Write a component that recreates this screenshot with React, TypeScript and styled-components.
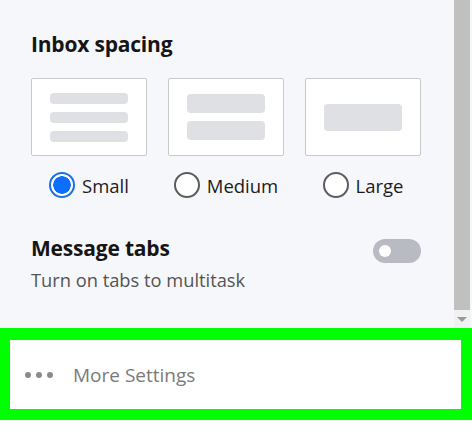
import React, { useState } from 'react';
import styled, { createGlobalStyle } from 'styled-components';

const GlobalStyle = createGlobalStyle`
  html, body {
    margin: 0;
    padding: 0;
    background: #ffffff;
  }
  body {
    font-family: 'Open Sans', 'Noto Sans', sans-serif;
  }
`;

type Density = 'small' | 'medium' | 'large';

const OPTIONS: { id: Density; label: string; bars: number[] }[] = [
  { id: 'small', label: 'Small', bars: [11, 11, 11] },
  { id: 'medium', label: 'Medium', bars: [19, 19] },
  { id: 'large', label: 'Large', bars: [27] },
];

const App: React.FC = () => {
  const [density, setDensity] = useState<Density>('small');
  const [tabs, setTabs] = useState(false);

  return (
    <Page>
      <GlobalStyle />
      <ScrollArea>
        <Panel>
          <Heading>Inbox spacing</Heading>
          <Options>
            {OPTIONS.map((opt) => (
              <Option key={opt.id} onClick={() => setDensity(opt.id)}>
                <Preview>
                  {opt.bars.map((h, i) => (
                    <Bar key={i} $height={h} />
                  ))}
                </Preview>
                <RadioRow>
                  <Radio $checked={density === opt.id} />
                  <RadioLabel>{opt.label}</RadioLabel>
                </RadioRow>
              </Option>
            ))}
          </Options>
          <TabsRow>
            <div>
              <Heading>Message tabs</Heading>
              <Hint>Turn on tabs to multitask</Hint>
            </div>
            <Toggle $on={tabs} onClick={() => setTabs(!tabs)}>
              <Knob $on={tabs} />
            </Toggle>
          </TabsRow>
        </Panel>
        <Scrollbar>
          <Thumb />
          <ArrowDown />
        </Scrollbar>
      </ScrollArea>
      <MoreBar>
        <Dots>
          <Dot />
          <Dot />
          <Dot />
        </Dots>
        <MoreLabel>More Settings</MoreLabel>
      </MoreBar>
    </Page>
  );
};

export default App;

const Page = styled.div`
  width: 472px;
  height: 432px;
  background: #ffffff;
  overflow: hidden;
`;

const ScrollArea = styled.div`
  display: flex;
  height: 328px;
  background: #f6f7fb;
`;

const Panel = styled.div`
  flex: 0 0 454px;
  box-sizing: border-box;
  padding: 30px 0 0 31px;
`;

const Heading = styled.div`
  font-size: 21px;
  font-weight: 700;
  line-height: 28px;
  color: #151515;
  letter-spacing: -0.2px;
`;

const Options = styled.div`
  display: flex;
  gap: 21px;
  margin-top: 20px;
`;

const Option = styled.div`
  display: flex;
  flex-direction: column;
  align-items: center;
  width: 116px;
  cursor: pointer;
`;

const Preview = styled.div`
  box-sizing: border-box;
  width: 116px;
  height: 78px;
  background: #ffffff;
  border: 1px solid #c9c9cb;
  border-radius: 2px;
  display: flex;
  flex-direction: column;
  justify-content: center;
  align-items: center;
  gap: 8px;
`;

const Bar = styled.div<{ $height: number }>`
  width: 78px;
  height: ${(p) => p.$height}px;
  background: #dfe0e3;
  border-radius: 4px;
`;

const RadioRow = styled.div`
  display: flex;
  align-items: center;
  gap: 7px;
  margin-top: 16px;
  height: 26px;
`;

const Radio = styled.div<{ $checked: boolean }>`
  box-sizing: border-box;
  width: 26px;
  height: 26px;
  border-radius: 50%;
  border: 2px solid ${(p) => (p.$checked ? '#1a6fe8' : '#5c5c5c')};
  background: ${(p) =>
    p.$checked
      ? 'radial-gradient(circle, #0d6efd 0 8.5px, #ffffff 9px)'
      : '#ffffff'};
`;

const RadioLabel = styled.span`
  font-size: 18.5px;
  line-height: 25px;
  color: #1c1c1c;
`;

const TabsRow = styled.div`
  display: flex;
  justify-content: space-between;
  align-items: flex-start;
  width: 390px;
  margin-top: 36px;
`;

const Hint = styled.div`
  margin-top: 5px;
  font-size: 18.3px;
  line-height: 25px;
  color: #545454;
`;

const Toggle = styled.div<{ $on: boolean }>`
  width: 48px;
  height: 24px;
  border-radius: 12px;
  background: ${(p) => (p.$on ? '#0d6efd' : '#b9bbc3')};
  margin-top: 5px;
  position: relative;
  cursor: pointer;
`;

const Knob = styled.div<{ $on: boolean }>`
  position: absolute;
  top: 6px;
  left: ${(p) => (p.$on ? '30px' : '6px')};
  width: 12px;
  height: 12px;
  border-radius: 50%;
  background: #ffffff;
`;

const Scrollbar = styled.div`
  flex: 0 0 16px;
  display: flex;
  flex-direction: column;
  background: #f1f1f1;
`;

const Thumb = styled.div`
  height: 310px;
  background: #c0c1be;
`;

const ArrowDown = styled.div`
  flex: 1;
  display: flex;
  justify-content: center;
  align-items: center;
  &::after {
    content: '';
    border-left: 5px solid transparent;
    border-right: 5px solid transparent;
    border-top: 5px solid #9a9a9a;
  }
`;

const MoreBar = styled.div`
  box-sizing: border-box;
  height: 92px;
  border: 11px solid #00ff00;
  border-top-width: 12px;
  border-left-width: 10px;
  background: #ffffff;
  display: flex;
  align-items: center;
  padding-left: 15px;
  gap: 20px;
`;

const Dots = styled.div`
  display: flex;
  gap: 5px;
`;

const Dot = styled.span`
  width: 6px;
  height: 6px;
  border-radius: 50%;
  background: #8a8a8a;
`;

const MoreLabel = styled.span`
  font-size: 19px;
  color: #7a7a7a;
`;
